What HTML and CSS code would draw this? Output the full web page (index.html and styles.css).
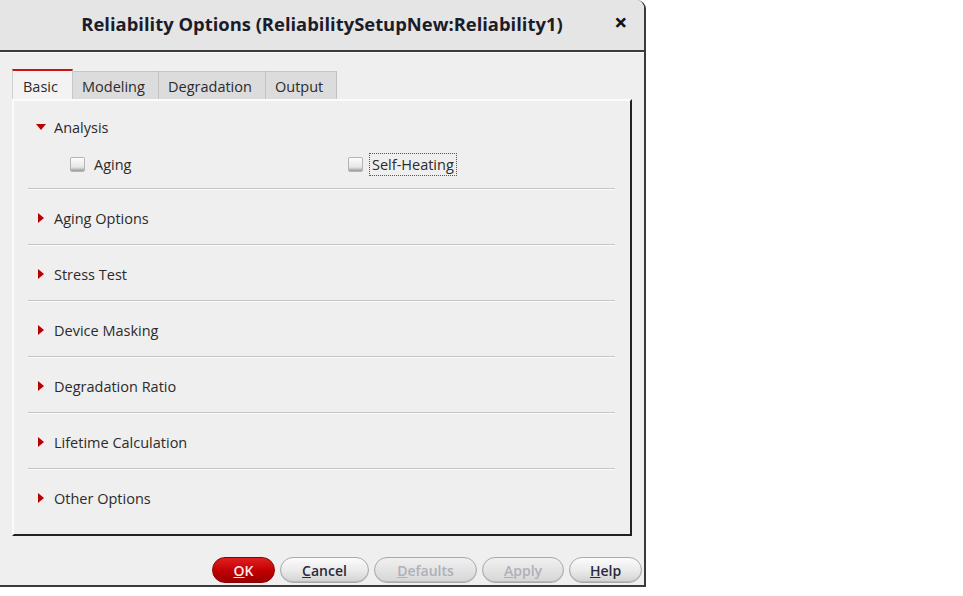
FILE: index.html
```html
<!DOCTYPE html>
<html>
<head>
<meta charset="utf-8">
<title>Reliability Options</title>
<link rel="stylesheet" href="styles.css">
</head>
<body>
<div class="window">
  <div class="titlebar">
    <div class="tb-side"></div>
    <div class="title">Reliability Options (ReliabilitySetupNew:Reliability1)</div>
    <div class="tb-side tb-right"><span class="close">&#x2715;</span></div>
  </div>
  <div class="content">
    <div class="tabs">
      <div class="tab active">Basic</div>
      <div class="tab">Modeling</div>
      <div class="tab">Degradation</div>
      <div class="tab">Output</div>
    </div>
    <div class="panel">
      <div class="section first">
        <div class="head"><svg class="tri" width="10" height="6" viewBox="0 0 10 6"><path d="M0 0H10L5 6Z"/></svg><span>Analysis</span></div>
        <div class="checks">
          <label class="check"><span class="box"></span><span class="lbl">Aging</span></label>
          <label class="check"><span class="box"></span><span class="lbl focus">Self-Heating</span></label>
        </div>
      </div>
      <div class="section"><div class="head"><svg class="tri r" width="6" height="10" viewBox="0 0 6 10"><path d="M0 0L6 5L0 10Z"/></svg><span>Aging Options</span></div></div>
      <div class="section"><div class="head"><svg class="tri r" width="6" height="10" viewBox="0 0 6 10"><path d="M0 0L6 5L0 10Z"/></svg><span>Stress Test</span></div></div>
      <div class="section"><div class="head"><svg class="tri r" width="6" height="10" viewBox="0 0 6 10"><path d="M0 0L6 5L0 10Z"/></svg><span>Device Masking</span></div></div>
      <div class="section"><div class="head"><svg class="tri r" width="6" height="10" viewBox="0 0 6 10"><path d="M0 0L6 5L0 10Z"/></svg><span>Degradation Ratio</span></div></div>
      <div class="section"><div class="head"><svg class="tri r" width="6" height="10" viewBox="0 0 6 10"><path d="M0 0L6 5L0 10Z"/></svg><span>Lifetime Calculation</span></div></div>
      <div class="section last"><div class="head"><svg class="tri r" width="6" height="10" viewBox="0 0 6 10"><path d="M0 0L6 5L0 10Z"/></svg><span>Other Options</span></div></div>
    </div>
    <div class="buttons">
      <button class="btn ok" style="width:63px"><u>O</u>K</button>
      <button class="btn" style="width:89px"><u>C</u>ancel</button>
      <button class="btn disabled" style="width:103px"><u>D</u>efaults</button>
      <button class="btn disabled" style="width:82px"><u>A</u>pply</button>
      <button class="btn" style="width:73px"><u>H</u>elp</button>
    </div>
  </div>
</div>
</body>
</html>
```
FILE: styles.css
```css
html, body {
  margin: 0;
  padding: 0;
  background: #ffffff;
}
body {
  font-family: "Open Sans", "Noto Sans", "DejaVu Sans", sans-serif;
  color: #2b2b2b;
}
.window {
  width: 644px;
  height: 585px;
  background: #efefef;
  border-right: 2px solid #3a3a3a;
  border-bottom: 2px solid #3a3a3a;
  border-top-right-radius: 9px;
  display: flex;
  flex-direction: column;
  overflow: hidden;
}
.titlebar {
  height: 50px;
  background: #e5e5e5;
  border-bottom: 2px solid #3c3c3c;
  box-shadow: 0 1px 0 #fafafa;
  display: grid;
  grid-template-columns: 1fr auto 1fr;
  align-items: center;
}
.title {
  font-weight: 700;
  font-size: 18.4px;
  color: #1c1c28;
  padding-bottom: 4px;
}
.tb-right {
  display: flex;
  justify-content: flex-end;
  padding-right: 17px;
  padding-bottom: 4px;
}
.close {
  font-size: 15px;
  font-weight: 900;
  color: #111;
  font-family: "DejaVu Sans", sans-serif;
  -webkit-text-stroke: 1px #111;
}
.content {
  flex: 1;
  padding: 17px 0 0 12px;
  display: flex;
  flex-direction: column;
}
.tabs {
  display: flex;
  align-items: flex-end;
  height: 30px;
}
.tab {
  height: 27px;
  line-height: 29px;
  font-size: 14.5px;
  color: #2b2b2b;
  background: #dcdcdc;
  border-top: 1px solid #c6c6c6;
  border-right: 1px solid #c2c2c2;
  padding: 0 0 0 9px;
  box-sizing: content-box;
}
.tab:nth-child(2) { width: 76px; }
.tab:nth-child(3) { width: 97px; }
.tab:nth-child(4) { width: 61px; }
.tab.active {
  width: 49px;
  height: 28px;
  background: #f3f3f3;
  border-top: 2px solid #cc1111;
  border-left: 1px solid #cfcfcf;
  border-right: 1px solid #c8c8c8;
  padding-left: 10px;
  line-height: 32px;
}
.panel {
  width: 587px;
  height: 433px;
  border-top: 2px solid #fbfbfb;
  border-left: 2px solid #fbfbfb;
  border-right: 2px solid #222;
  border-bottom: 2px solid #222;
  background: #efefef;
  padding: 0 15px 0 14px;
  box-sizing: content-box;
  display: flex;
  flex-direction: column;
}
.section {
  padding: 18px 0 16px;
  border-bottom: 1px solid #c4c4c4;
  box-shadow: 0 1px 0 #fbfbfb;
  margin-bottom: 1px;
}
.section.first {
  padding-top: 16px;
  padding-bottom: 12px;
}
.section.last {
  border-bottom: none;
  box-shadow: none;
}
.head {
  display: flex;
  align-items: center;
  height: 20px;
  font-size: 14.5px;
  color: #2b2b2b;
}
.tri {
  fill: #b80000;
  margin-left: 8px;
  margin-right: 8px;
}
.tri.r {
  margin-left: 10px;
  margin-right: 10px;
}
.checks {
  display: grid;
  grid-template-columns: 278px auto;
  padding-left: 42px;
  margin-top: 15px;
  height: 24px;
  align-items: center;
}
.check {
  display: flex;
  align-items: center;
  font-size: 14.5px;
  color: #2b2b2b;
}
.box {
  width: 13px;
  height: 13px;
  border: 1px solid #b4b4b4;
  border-radius: 2px;
  background: linear-gradient(#fdfdfd, #e6e6e6 70%, #9a9a9a);
  margin-right: 9px;
}
.check:nth-child(2) .box {
  margin-right: 6px;
}
.lbl.focus {
  border: 1px dotted #555;
  padding: 1px 2px;
  line-height: 19px;
}
.buttons {
  display: flex;
  justify-content: flex-end;
  gap: 5px;
  margin-top: 21px;
  padding-right: 2px;
}
.btn {
  height: 26px;
  border: 1px solid #a9a9a9;
  border-radius: 13px;
  background: linear-gradient(#fcfcfc, #e9e9e9 55%, #d2d2d2);
  font-family: "Open Sans", "Noto Sans", sans-serif;
  font-size: 14px;
  font-weight: 600;
  color: #2a2a3a;
  padding: 0;
  box-shadow: inset 0 -1px 0 #bbb;
}
.btn.ok {
  background: linear-gradient(#e02020, #c00000 55%, #9c0000);
  border-color: #8a0000;
  color: #ffe8e8;
  box-shadow: none;
}
.btn.disabled {
  color: #b0b0b8;
  background: linear-gradient(#f0f0f0, #e2e2e2 55%, #d6d6d6);
}
```
